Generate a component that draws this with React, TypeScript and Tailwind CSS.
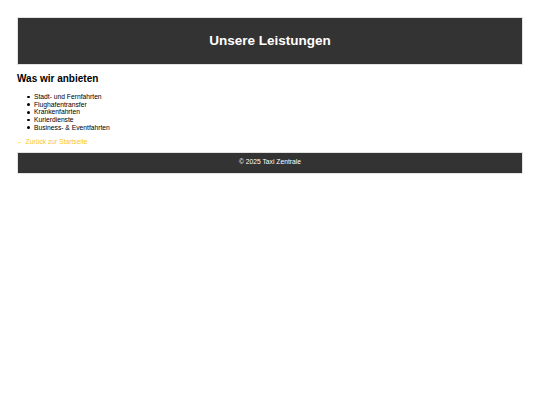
import { FC } from 'react';

const App: FC = () => {
  const services = [
    'Stadt- und Fernfahrten',
    'Flughafentransfer',
    'Krankenfahrten',
    'Kurierdienste',
    'Business- & Eventfahrten',
  ];

  return (
    <div className="min-h-[405px] bg-white px-[17px] pt-[17px] text-black font-['Liberation_Sans',Arial,sans-serif]">
      {/* Header */}
      <header className="flex h-[48px] items-center justify-center border border-[#e2e2e2] bg-[#333333]">
        <h1 className="text-[13.5px] font-bold leading-none text-white">Unsere Leistungen</h1>
      </header>

      {/* Content */}
      <main>
        <h2 className="mt-[8px] text-[10px] font-bold leading-[11.5px]">Was wir anbieten</h2>
        <ul className="mt-[8.5px] pl-[10px] text-[6.72px] leading-[7.7px]">
          {services.map((s) => (
            <li key={s} className="flex items-center">
              <span className="mr-[4.5px] h-[2.5px] w-[2.5px] shrink-0 rounded-full bg-black" />
              <span>{s}</span>
            </li>
          ))}
        </ul>
        <a href="#" className="mt-[6.5px] block text-[6.72px] leading-[7.7px] text-[#fcc814]">
          ← Zurück zur Startseite
        </a>
      </main>

      {/* Footer */}
      <footer className="mt-[6px] flex h-[22px] items-center justify-center border border-[#e2e2e2] bg-[#333333]">
        <p className="text-[6.72px] leading-none text-white">© 2025 Taxi Zentrale</p>
      </footer>
    </div>
  );
};

export default App;
